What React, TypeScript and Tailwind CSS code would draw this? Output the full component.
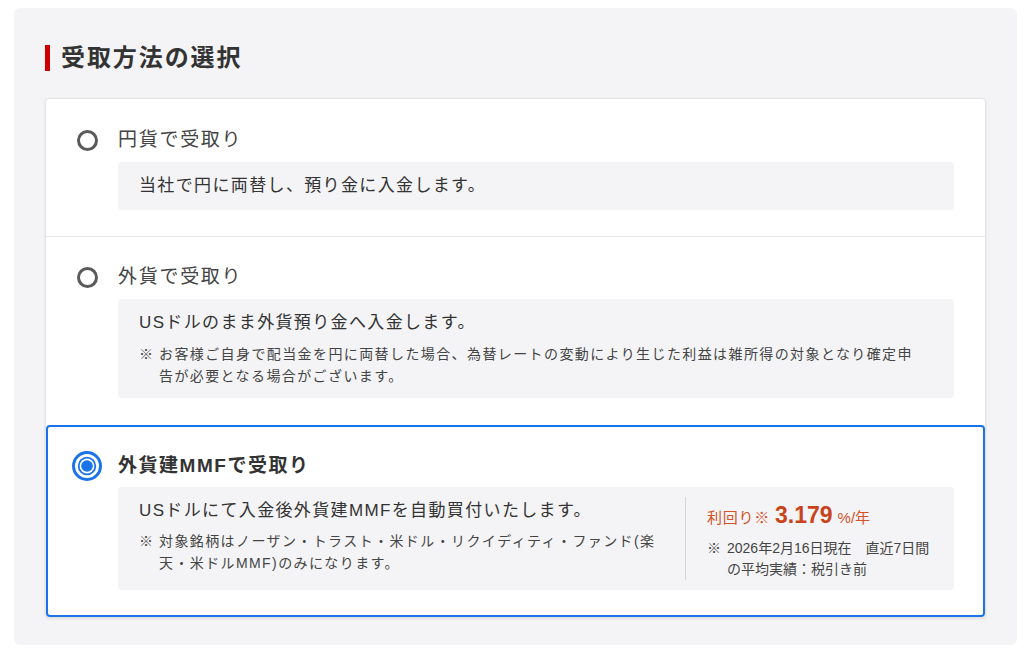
import React from "react";

type Option = {
  id: string;
  label: string;
};

function Radio({ checked }: { checked: boolean }) {
  if (checked) {
    return (
      <svg width="30" height="30" viewBox="0 0 30 30" className="shrink-0">
        <circle cx="15" cy="15" r="13.5" fill="none" stroke="#1a73e8" strokeWidth="3" />
        <circle cx="15" cy="15" r="9.2" fill="#1a73e8" />
        <circle cx="15" cy="15" r="7.4" fill="#fff" />
        <circle cx="15" cy="15" r="5.8" fill="#1a73e8" />
      </svg>
    );
  }
  return <span className="block w-[21px] h-[21px] rounded-full border-[3px] border-[#5a5a5a] bg-white shrink-0" />;
}

function Note({ children }: { children: React.ReactNode }) {
  return (
    <div className="flex text-[14px] leading-[22px] text-[#444] tracking-[0.1em]">
      <span className="w-[20px] shrink-0 tracking-normal">※</span>
      <span>{children}</span>
    </div>
  );
}

export default function App() {
  const [selected, setSelected] = React.useState("mmf");

  const options: Option[] = [
    { id: "jpy", label: "円貨で受取り" },
    { id: "fx", label: "外貨で受取り" },
    { id: "mmf", label: "外貨建MMFで受取り" },
  ];

  const body = (id: string) => {
    if (id === "jpy") {
      return (
        <div className="bg-[#f4f4f6] rounded-[4px] pl-[21px] pr-[22px] py-[12px] text-[17px] leading-[24px] text-[#333] tracking-[0.08em]">
          当社で円に両替し、預り金に入金します。
        </div>
      );
    }
    if (id === "fx") {
      return (
        <div className="bg-[#f4f4f6] rounded-[4px] pl-[21px] pr-[22px] pt-[12px] pb-[11px] text-[#333]">
          <div className="text-[17px] leading-[24px] tracking-[0.08em]">USドルのまま外貨預り金へ入金します。</div>
          <div className="mt-[8px]">
            <Note>
              お客様ご自身で配当金を円に両替した場合、為替レートの変動により生じた利益は雑所得の対象となり確定申
              <br />
              告が必要となる場合がございます。
            </Note>
          </div>
        </div>
      );
    }
    return (
      <div className="bg-[#f4f4f6] rounded-[4px] py-[10px] flex text-[#333]">
        <div className="w-[568px] shrink-0 pl-[21px] pt-[2px] border-r border-[#d6d6d8]">
          <div className="text-[17px] leading-[24px] tracking-[0.08em]">USドルにて入金後外貨建MMFを自動買付いたします。</div>
          <div className="mt-[7px]">
            <Note>
              対象銘柄はノーザン・トラスト・米ドル・リクイディティ・ファンド(楽
              <br />
              天・米ドルMMF)のみになります。
            </Note>
          </div>
        </div>
        <div className="flex-1 pl-[21px]">
          <div className="flex items-baseline h-[28px] pt-[1px] text-[#d4532a]">
            <span className="text-[15px] tracking-[0.05em]">利回り※</span>
            <span className="text-[23px] font-bold text-[#c9431c] ml-[5px] mr-[5px]">3.179</span>
            <span className="text-[15px]">%/年</span>
          </div>
          <div className="mt-[13px] flex text-[14px] leading-[21px] text-[#444]">
            <span className="w-[20px] shrink-0">※</span>
            <span>
              2026年2月16日現在　直近7日間
              <br />
              の平均実績：税引き前
            </span>
          </div>
        </div>
      </div>
    );
  };

  return (
    <div className="min-h-[649px] bg-white pl-[14px] pt-[8px] font-['Liberation_Sans','Noto_Sans_CJK_JP',sans-serif]">
      <div className="w-[1003px] h-[637px] bg-[#f4f4f6] rounded-[6px] px-[31px] pt-[37px]">
        <div className="flex items-center h-[26px] mb-[27px]">
          <span className="w-[5px] h-[26px] bg-[#cc0000] mr-[11px]" />
          <h2 className="text-[24px] leading-[26px] font-bold text-[#333] tracking-[0.08em]">受取方法の選択</h2>
        </div>

        <div className="bg-white border border-[#e3e3e5] rounded-[4px] shadow-[0_1px_3px_rgba(0,0,0,0.08)]">
          {options.map((opt, i) => {
            const isSel = selected === opt.id;
            return (
              <div
                key={opt.id}
                onClick={() => setSelected(opt.id)}
                className={
                  isSel
                    ? "border-2 border-[#1a73e8] rounded-[4px] pl-[24px] pr-[29px] pt-[26px] pb-[25px] cursor-pointer"
                    : i === 0
                      ? "border-b border-[#e8e8ea] pl-[31px] pr-[31px] pt-[28px] pb-[26px] cursor-pointer"
                      : "pl-[31px] pr-[31px] pt-[27px] pb-[27px] cursor-pointer"
                }
              >
                <div className="flex items-center h-[26px]">
                  <div className={isSel ? "w-[46px] flex items-center" : "w-[41px] flex items-center"}>
                    <Radio checked={isSel} />
                  </div>
                  <span
                    className={
                      isSel
                        ? "text-[19px] leading-[26px] font-bold text-[#333] tracking-[0.08em]"
                        : "text-[19px] leading-[26px] text-[#444] tracking-[0.09em]"
                    }
                  >
                    {opt.label}
                  </span>
                </div>
                <div className={isSel ? "mt-[8px] ml-[46px]" : "mt-[9px] ml-[41px]"}>{body(opt.id)}</div>
              </div>
            );
          })}
        </div>
      </div>
    </div>
  );
}
